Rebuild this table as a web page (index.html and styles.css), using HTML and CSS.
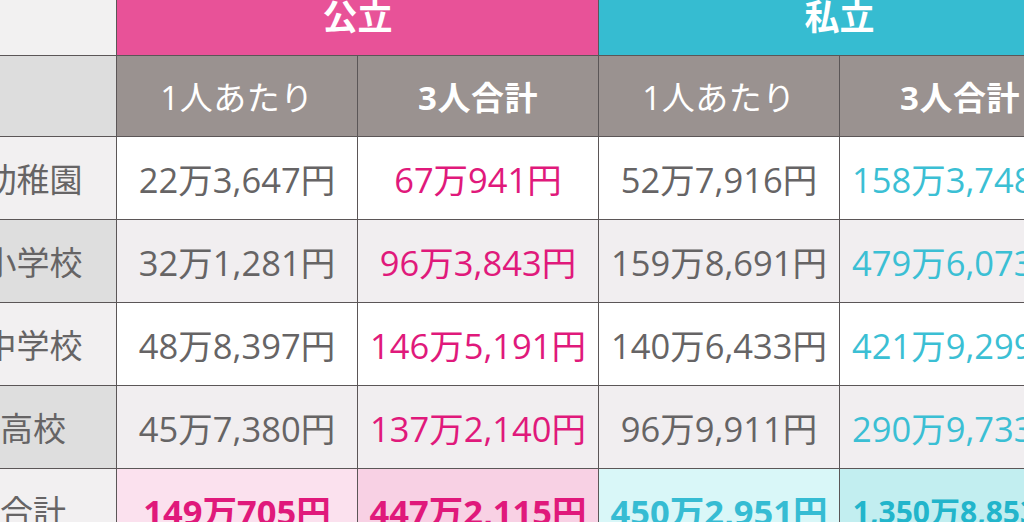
FILE: index.html
```html
<!DOCTYPE html>
<html lang="ja">
<head>
<meta charset="utf-8">
<title>教育費比較</title>
<link rel="stylesheet" href="styles.css">
</head>
<body>
<div class="viewport">
  <div class="grid">
    <div class="cell corner"></div>
    <div class="cell group public">公立</div>
    <div class="cell group private">私立</div>

    <div class="cell corner2"></div>
    <div class="cell sub">1人あたり</div>
    <div class="cell sub bold">3人合計</div>
    <div class="cell sub">1人あたり</div>
    <div class="cell sub bold">3人合計</div>

    <div class="cell label">幼稚園</div>
    <div class="cell val">22万3,647円</div>
    <div class="cell val pink">67万941円</div>
    <div class="cell val">52万7,916円</div>
    <div class="cell val teal">158万3,748円</div>

    <div class="cell label alt">小学校</div>
    <div class="cell val alt">32万1,281円</div>
    <div class="cell val pink alt">96万3,843円</div>
    <div class="cell val alt">159万8,691円</div>
    <div class="cell val teal alt">479万6,073円</div>

    <div class="cell label">中学校</div>
    <div class="cell val">48万8,397円</div>
    <div class="cell val pink">146万5,191円</div>
    <div class="cell val">140万6,433円</div>
    <div class="cell val teal">421万9,299円</div>

    <div class="cell label alt">高校</div>
    <div class="cell val alt">45万7,380円</div>
    <div class="cell val pink alt">137万2,140円</div>
    <div class="cell val alt">96万9,911円</div>
    <div class="cell val teal alt">290万9,733円</div>

    <div class="cell label total-label">合計</div>
    <div class="cell val total pink-light">149万705円</div>
    <div class="cell val total pink-mid">447万2,115円</div>
    <div class="cell val total teal-light">450万2,951円</div>
    <div class="cell val total teal-mid small">1,350万8,853円</div>
  </div>
</div>
</body>
</html>
```

FILE: styles.css
```css
html, body {
  margin: 0;
  padding: 0;
  background: #ffffff;
}

body {
  font-family: "Open Sans", "Noto Sans CJK JP", sans-serif;
  overflow: hidden;
}

.viewport {
  width: 1024px;
  height: 522px;
  overflow: hidden;
}

.grid {
  display: grid;
  grid-template-columns: 160px repeat(4, 240px);
  grid-template-rows: 82px 80px repeat(5, 82px);
  gap: 1px;
  background: #5b5657;
  margin-top: -27px;
  margin-left: -44px;
  width: max-content;
}

.cell {
  display: flex;
  align-items: center;
  justify-content: center;
  font-size: 34.5px;
  color: #666465;
  white-space: nowrap;
}

.corner {
  background: #f2f1f1;
}

.corner2 {
  background: #dddddd;
}

.group {
  grid-column: span 2;
  color: #ffffff;
  font-weight: 700;
  font-size: 35px;
}

.public {
  background: #e85298;
}

.private {
  background: #36bcd1;
}

.sub {
  background: #9a9290;
  color: #ffffff;
  font-size: 33px;
  letter-spacing: 0.5px;
}

.sub.bold {
  font-weight: 700;
}

.label {
  background: #f2f0f1;
  font-size: 33px;
  padding-right: 6px;
}

.label.alt {
  background: #dedede;
}

.val {
  background: #ffffff;
}

.val.alt {
  background: #f1eef0;
}

.pink {
  color: #e0197b;
}

.teal {
  color: #3bbfd4;
}

.total {
  font-weight: 700;
}

.total-label {
  font-weight: 400;
}

.pink-light {
  background: #fbe1ee;
  color: #e0197b;
}

.pink-mid {
  background: #f8d1e4;
  color: #e0197b;
}

.teal-light {
  background: #d9f7f8;
  color: #36bcd3;
}

.teal-mid {
  background: #c2eef0;
  color: #22b5cb;
}

.small {
  font-size: 30px;
}
```
